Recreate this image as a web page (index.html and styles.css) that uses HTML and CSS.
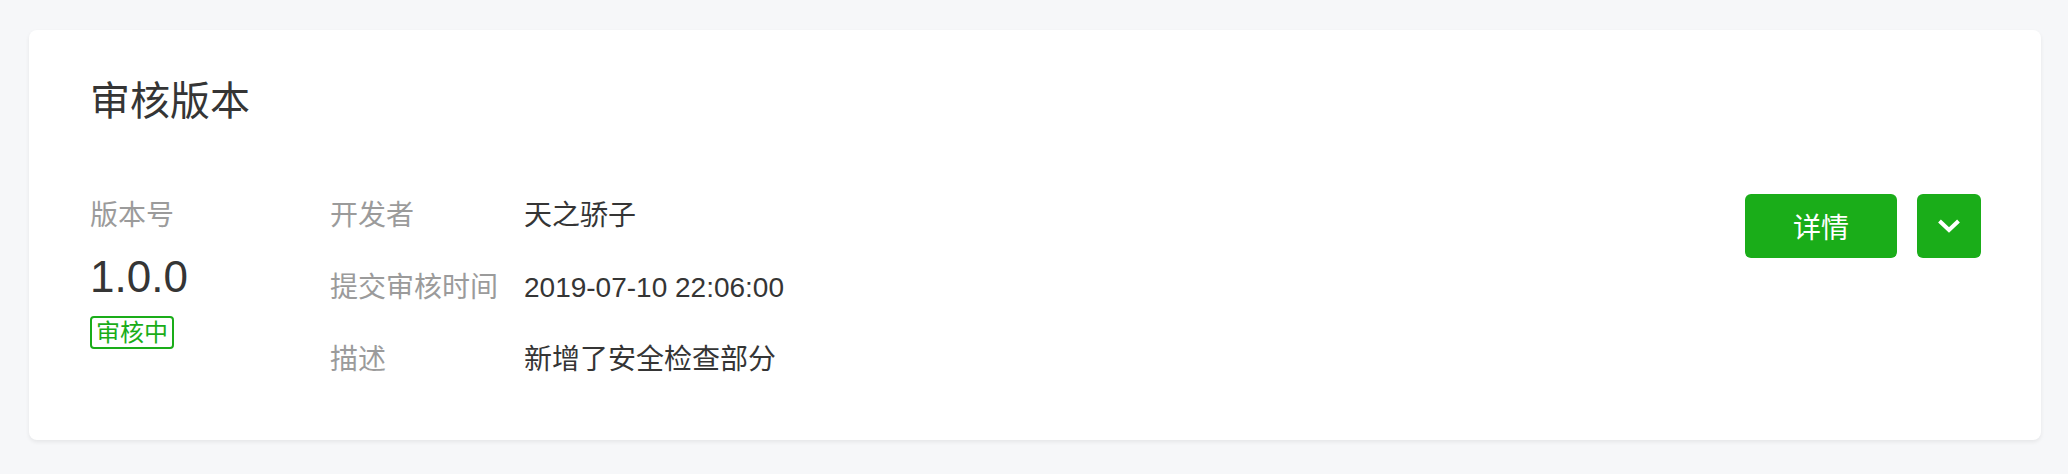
FILE: index.html
```html
<!DOCTYPE html>
<html lang="zh-CN">
<head>
<meta charset="utf-8">
<title>审核版本</title>
<link rel="stylesheet" href="styles.css">
</head>
<body>
  <div class="page">
    <section class="card">
      <h2 class="card-title">审核版本</h2>
      <div class="card-body">
        <div class="version-col">
          <div class="label">版本号</div>
          <div class="version-num">1.0.0</div>
          <span class="badge">审核中</span>
        </div>
        <div class="info">
          <div class="row"><span class="label key">开发者</span><span class="value">天之骄子</span></div>
          <div class="row"><span class="label key">提交审核时间</span><span class="value">2019-07-10 22:06:00</span></div>
          <div class="row"><span class="label key">描述</span><span class="value">新增了安全检查部分</span></div>
        </div>
        <div class="actions">
          <button class="btn btn-detail">详情</button>
          <button class="btn btn-more" aria-label="更多">
            <svg width="24" height="16" viewBox="0 0 24 16"><path d="M2.5 3 L12 12 L21.5 3" fill="none" stroke="#fff" stroke-width="4"/></svg>
          </button>
        </div>
      </div>
    </section>
  </div>
</body>
</html>
```

FILE: styles.css
```css
html, body {
  margin: 0;
  padding: 0;
  background: #f6f7f9;
  font-family: "Liberation Sans", "Noto Sans CJK SC", sans-serif;
  color: #353535;
}
.page {
  padding: 30px 27px 32px 29px;
}
.card {
  background: #fff;
  border-radius: 8px;
  box-shadow: 0 2px 4px rgba(0, 0, 0, 0.07);
  padding: 43px 60px 60px 61px;
}
.card-title {
  margin: 0;
  font-size: 40px;
  line-height: 56px;
  font-weight: normal;
  color: #353535;
}
.card-body {
  display: flex;
  align-items: flex-start;
  margin-top: 67px;
}
.version-col {
  width: 240px;
  flex: none;
  display: flex;
  flex-direction: column;
  align-items: flex-start;
}
.label {
  font-size: 28px;
  line-height: 40px;
  color: #9b9b9b;
}
.version-num {
  font-size: 44px;
  line-height: 50px;
  margin-top: 16px;
  color: #353535;
}
.badge {
  margin-top: 14px;
  font-size: 24px;
  line-height: 29px;
  color: #1aad19;
  border: 2px solid #1aad19;
  border-radius: 4px;
  padding: 0 4px;
}
.info {
  flex: 1;
  display: flex;
  flex-direction: column;
  gap: 32px;
}
.row {
  display: flex;
  align-items: center;
  font-size: 28px;
  line-height: 40px;
}
.key {
  width: 194px;
  flex: none;
  white-space: nowrap;
}
.value {
  color: #353535;
}
.actions {
  display: flex;
  gap: 20px;
  flex: none;
  margin-top: -2px;
}
.btn {
  border: 0;
  background: #1aad19;
  color: #fff;
  border-radius: 6px;
  height: 64px;
  font-family: inherit;
  font-size: 28px;
  padding: 0;
  display: flex;
  align-items: center;
  justify-content: center;
  cursor: pointer;
}
.btn-detail {
  width: 152px;
}
.btn-more {
  width: 64px;
}
```
